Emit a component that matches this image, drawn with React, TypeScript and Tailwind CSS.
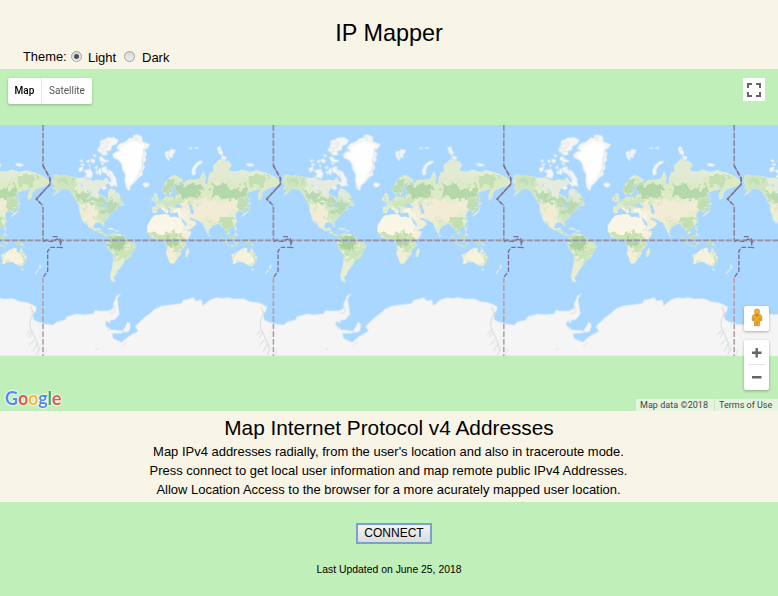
import React from "react";

const TILE = 691.2;
const COPIES = [-1, 0, 1, 2, 3];

const ANTARCTICA =
  "M0 596 L40 600 L50 591 L75 585 L80 575 L110 567 L130 569 L160 567 L165 556 L180 558 L205 558 L220 550 L220 535 L228 520 L228 514 L242 506 L231 521 L235 545 L238 568 L225 583 L200 588 L195 600 L215 615 L250 618 L246 624 L216 625 L219 640 L245 652 L265 635 L295 618 L285 605 L310 580 L330 565 L345 552 L365 543 L390 540 L425 535 L430 525 L444 523 L460 517 L468 528 L485 525 L488 543 L510 525 L530 518 L550 520 L562 517 L580 522 L610 521 L630 530 L655 533 L680 545 L678 558 L670 567 L672 585 L685 591 L703 596 V693 H0Z";

function Land() {
  return (
    <>
      <g transform="translate(-9 0)">
        <path d="M36 170 L40 160 L40 152 L50 148 L60 153 L75 152 L90 154 L118 160 L130 158 L146 164 L160 168 L175 164 L190 168 L198 157 L208 172 L194 182 L180 190 L172 205 L186 214 L196 218 L199 230 L206 216 L204 200 L212 190 L225 196 L230 205 L236 204 L243 222 L250 238 L236 243 L227 247 L234 252 L222 256 L215 263 L207 272 L201 282 L190 290 L192 306 L184 294 L173 291 L164 294 L160 305 L165 313 L178 308 L182 318 L190 325 L203 331 L200 334 L180 323 L160 315 L148 308 L138 292 L130 282 L136 298 L126 284 L122 268 L118 258 L117 240 L110 228 L100 212 L92 198 L80 192 L65 190 L55 202 L38 212 L50 197 L38 190 L46 182Z" />
        <path d="M203 341 L212 328 L225 324 L245 330 L258 342 L268 350 L284 356 L287 366 L276 380 L272 395 L256 405 L248 418 L240 428 L232 438 L227 449 L220 458 L226 472 L214 468 L211 450 L217 430 L220 408 L222 390 L208 375 L200 360Z" />
        <path d="M203 310 L216 309 L225 315 L212 314Z M226 316 L237 317 L230 321Z M242 240 L252 238 L248 244Z" />
      </g>
      <g transform="translate(321 0)">
        <path d="M8 262 L8 245 L22 245 L18 236 L30 230 L45 218 L48 211 L53 217 L68 216 L78 212 L86 200 L78 196 L74 190 L82 178 L76 174 L66 188 L68 200 L60 211 L53 204 L44 208 L36 197 L42 180 L55 161 L72 150 L80 153 L98 164 L95 174 L84 170 L90 180 L105 173 L112 165 L130 165 L150 162 L160 140 L167 156 L163 174 L173 180 L176 158 L181 143 L192 140 L190 122 L210 103 L225 107 L235 109 L245 120 L235 136 L250 140 L265 139 L275 134 L300 141 L320 136 L350 145 L376 157 L393 172 L378 182 L360 188 L350 192 L338 202 L335 218 L326 225 L325 208 L335 190 L310 197 L292 202 L286 220 L296 235 L290 250 L276 262 L272 256 L262 258 L256 270 L260 289 L250 304 L235 312 L240 326 L232 330 L226 315 L216 306 L205 295 L190 301 L178 312 L174 329 L164 308 L158 294 L140 285 L119 276 L119 284 L136 290 L139 297 L125 309 L108 318 L98 301 L88 282 L84 262 L60 264 L61 252 L48 240 L56 258 L50 266 L40 255 L28 247 L22 255 L18 264Z" />
        <path d="M-8 302 L2 285 L12 272 L40 268 L55 269 L60 277 L75 275 L90 281 L96 297 L106 317 L124 320 L119 334 L104 350 L109 360 L99 370 L93 377 L92 388 L80 403 L72 415 L60 415 L55 400 L48 385 L52 370 L48 357 L43 347 L18 341 L4 338 L-8 320Z" />
        <path d="M114 369 L118 378 L112 395 L107 396 L107 382Z" />
        <path d="M245 390 L262 382 L272 374 L285 369 L293 372 L290 382 L300 383 L304 367 L311 382 L321 396 L317 412 L307 424 L294 421 L280 411 L265 411 L249 417 L249 404Z M304 431 L312 432 L308 438Z" />
        <path d="M361 419 L365 425 L360 432 L357 429Z M357 433 L351 444 L346 447 L350 438Z" />
        <path d="M12 207 L20 204 L25 222 L26 229 L13 232 L17 220Z M6 216 L13 215 L10 228 L5 228Z" />
        <path d="M297 230 L304 236 L296 240Z M299 244 L297 258 L284 270 L274 275 L282 265 L292 259Z M295 204 L299 211 L297 227 L293 217Z" />
        <path d="M254 299 L260 307 L258 319 L253 310Z M255 321 L264 332 L257 333Z M260 285 L262 292 L259 292Z M214 333 L232 356 L226 358 L212 337Z M238 336 L253 330 L252 350 L241 349Z M257 342 L266 343 L258 355 L265 356 L257 359Z M232 359 L256 363 L254 366 L234 362Z M284 346 L306 353 L313 363 L302 357 L292 359Z M177 328 L181 333 L178 337Z" />
      </g>
    </>
  );
}

function Ice() {
  return (
    <>
      <g transform="translate(-9 0)">
        <path d="M218 88 L227 80 L240 78 L229 69 L240 55 L252 52 L262 46 L266 40 L280 39 L280 31 L292 29 L306 35 L307 50 L330 58 L322 70 L312 75 L320 86 L315 98 L319 105 L310 113 L314 128 L306 140 L309 149 L296 157 L284 172 L272 182 L268 197 L259 190 L254 165 L256 150 L246 130 L245 118 L235 105 L220 98Z" />
        <path d="M308 177 L313 173 L325 174 L328 181 L319 187 L312 184Z" />
        <path d="M171 74 L180 62 L181 48 L194 43 L203 38 L221 37 L235 46 L228 58 L216 61 L212 76 L199 78 L203 88 L191 91 L180 83Z" />
        <path d="M176 98 L185 94 L193 104 L207 107 L197 112 L183 109Z M115 130 L129 125 L127 137 L118 141Z M130 137 L151 132 L158 146 L154 160 L134 156 L141 146Z M139 108 L151 104 L144 114Z M155 101 L165 105 L163 114 L152 111Z M158 88 L170 91 L164 97Z M162 127 L173 123 L170 133Z M165 141 L173 138 L174 149Z M185 128 L198 124 L202 134 L216 140 L222 151 L228 160 L229 175 L233 183 L223 182 L213 184 L205 174 L215 169 L210 158 L202 151 L197 144 L187 142Z M182 112 L193 116 L187 121Z M146 119 L153 121 L149 127Z M176 132 L183 131 L183 150 L175 145Z M186 184 L196 183 L200 191 L191 194 L185 190Z M118 106 L128 104 L126 112Z M120 118 L134 116 L130 123Z" />
        <path d={ANTARCTICA} />
        <path d="M262 592 L269 594 L271 606 L266 619 L252 622 L250 614 L257 604Z M202 587 L210 586 L209 595Z" />
      </g>
      <g transform="translate(321 0)">
        <path d="M45 83 L54 77 L58 82 L61 73 L76 75 L72 87 L67 85 L69 98 L59 96 L57 108 L49 99Z M115 70 L125 67 L126 72Z M132 69 L143 66 L144 71Z M201 68 L211 64 L215 75 L219 84 L216 91 L207 85Z M216 93 L229 96 L226 104 L215 102Z M157 107 L157 113 L142 122 L136 135 L136 148 L127 150 L125 136 L134 119 L146 110Z M288 116 L300 115 L313 120 L303 124 L291 122Z" />
      </g>
    </>
  );
}

function WorldMap() {
  return (
    <svg className="block h-[231px] w-full" viewBox="0 0 2334 693" preserveAspectRatio="none">
      <defs>
        <filter id="tint" x="-10%" y="-10%" width="120%" height="120%" colorInterpolationFilters="sRGB">
          <feTurbulence type="fractalNoise" baseFrequency="0.06" numOctaves="3" seed="4" result="n" />
          <feDisplacementMap in="SourceGraphic" in2="n" scale="48" xChannelSelector="R" yChannelSelector="G" />
          <feGaussianBlur stdDeviation="1.8" />
        </filter>
        <clipPath id="landClip">
          <path d="M-30 0H740V500H-30Z" />
        </clipPath>
        <mask id="landMask" maskUnits="userSpaceOnUse" x="-30" y="0" width="770" height="693">
          <g fill="white">
            <Land />
          </g>
        </mask>
        <g id="world">
          <g fill="#e4edd0" stroke="#dcebe4" strokeWidth="1.5" strokeLinejoin="round">
            <Land />
          </g>
          <g mask="url(#landMask)">
            <g filter="url(#tint)" clipPath="url(#landClip)">
              <g transform="translate(-9 0)">
                <path fill="#d0e6c1" d="M32 145H100L115 200L180 220L255 210L252 270L195 310L175 290L120 245L92 205L40 212Z" />
                <path fill="#e6ebe0" d="M105 155L200 150L215 200L180 218L150 208L112 182Z" />
                <path fill="#dfe9d8" d="M203 188L230 192L246 225L215 232Z" />
                <path fill="#b8d9b2" d="M98 190L130 205L165 222L200 232L240 230L235 246L210 262L194 278L185 260L205 245L175 237L140 232L115 222Z" />
                <path fill="#bfe0b5" d="M52 165L82 158L90 174L62 182Z" />
                <path fill="#f2ecd4" d="M117 235L166 235L174 258L168 283L166 307L145 306L126 280Z" />
                <path fill="#dfe8c4" d="M128 240L137 238L141 258L133 264Z" />
                <path fill="#c5dfb0" d="M160 308L204 330L199 340L158 320Z" />
                <path fill="#cce5b8" d="M198 320L292 345L280 395L235 410L210 385Z" />
                <path fill="#abd0a0" d="M205 336L225 338L258 344L253 368L238 376L222 374L208 362Z" />
                <path fill="#eaedd3" d="M203 376L222 385L232 425L222 475H205Z" />
                <path fill="#eeecd3" d="M262 360L276 358L266 380L258 386Z" />
              </g>
              <g transform="translate(321 0)">
                <path fill="#dceac6" d="M0 150H395V230H290L250 215L120 230L0 250Z" />
                <path fill="#e3ead4" d="M185 105L245 105L250 140L300 145L280 165L220 170L180 160Z" />
                <path fill="#b2d6a9" d="M72 178L112 174L155 178L150 214L112 222L80 215Z" />
                <path fill="#b5d8ab" d="M188 175L230 178L240 190L290 190L298 212L250 223L215 222L180 205Z" />
                <path fill="#b9dbb0" d="M30 188L64 156L76 162L62 205L40 210Z" />
                <path fill="#c5dfb5" d="M290 150L350 150L345 178L320 183L298 175Z" />
                <path fill="#cce5bf" d="M20 226L100 222L98 242L58 244L36 248Z" />
                <path fill="#f2ebd5" d="M95 230L150 224L175 222L215 232L265 231L252 258L210 275L200 292L165 300L150 280L100 275Z" />
                <path fill="#ddeac2" d="M112 220L145 220L150 232L118 236Z" />
                <path fill="#f3efdb" d="M60 254L120 254L145 300L105 320L85 282Z" />
                <path fill="#dde8c3" d="M160 282L188 286L200 296L175 300Z" />
                <path fill="#c1dfaf" d="M202 282L230 275L250 276L262 300L245 330L220 314Z" />
                <path fill="#c0deb2" d="M262 225L300 215L298 260L272 254Z" />
                <path fill="#f9f6e7" d="M-20 258H92L112 321L65 325L-20 324Z" />
                <path fill="#f4eeda" d="M98 312L132 315L112 352L95 345Z" />
                <path fill="#cbe2b2" d="M-10 328L55 321L95 327L102 354L96 385L58 375L43 350L4 343Z" />
                <path fill="#b0d4a3" d="M48 340L80 336L82 360L60 367Z" />
                <path fill="#f3efd5" d="M44 376L75 373L80 400L55 420Z" />
                <path fill="#f6f2de" d="M244 378L295 380L309 405L298 419L275 410L244 420Z" />
                <path fill="#c9e1b4" d="M304 365L325 390L322 424L306 427L315 398Z" />
                <path fill="#c1dcad" d="M205 330H315V367H205Z" />
              </g>
            </g>
          </g>
          <g fill="#aad7ff" transform="translate(321 0)">
            <path d="M76 240L84 236L90 240L99 245L95 248L76 247Z M116 240L124 237L127 248L132 259L129 268L121 264L121 254Z M138 238L145 237L144 243Z M90 272L98 282L110 297L108 306L98 292Z" />
          </g>
          <g fill="#aad7ff" transform="translate(-9 0)">
            <path d="M188 233L200 236L205 244L197 242L194 250Z M120 181L130 178L127 185Z M137 197L148 195L143 199Z M160 212L164 222L160 219Z" />
          </g>
          <g fill="#f4f5f4" stroke="#e6efef" strokeWidth="1.5">
            <Ice />
          </g>
          <path
            fill="#fefefe"
            d="M218 84L236 82L229 70L246 60L277 47L294 56L305 60L297 95L291 132L275 160L258 183L251 168L249 142L239 115L222 98Z"
          />
          <g fill="none" stroke="#d4dadb" strokeWidth="2.2" opacity=".8">
            <path d="M165 74L178 54L188 59M171 72L191 66L198 50M185 48L195 55M165 84L185 78M187 128L194 140L205 160M271 34L284 39M274 44L284 45M300 70L304 92L297 101L300 124L289 145" />
            <path d="M372 90L379 84L376 100M534 72L527 78" />
          </g>
          <g fill="none" stroke="#d8d9d9" strokeWidth="3">
            <path d="M655 545L661 565L653 585L651 602L658 622L649 637M661 568L666 563M652 616L642 630M658 619L672 650L678 669L690 684M665 646L649 660M673 656L661 679M681 668L672 690M690 684L707 678" />
            <path d="M187 589L190 604L199 617M216 542L215 562L199 566M251 650L237 667M156 675L166 669M6 690L10 672" opacity=".65" />
          </g>
        </g>
        <g id="grid" fill="none" strokeWidth="5">
          <path stroke="#a8b4c8" strokeOpacity=".45" d="M0 0V122L21 160V178L-20 222L0 242V346M0 346H692" />
          <path stroke="#8c8ea6" strokeDasharray="17 6" d="M0 0V122L21 160V178L-20 222L0 242V346" />
          <path stroke="#9690a4" strokeDasharray="17 6" d="M0 346H692" />
          <path stroke="#7b6f90" strokeWidth="4" strokeDasharray="14 5" d="M0 122L21 160V178L-20 222L-7 236M0 350L10 345L15 349H30L42 342L51 347L54 367H23L14 378V438L0 458" />
          <path stroke="#7b6f90" strokeWidth="3.5" d="M29 335H44M50 340L56 354M52 368H60" />
          <path stroke="#b5a3a7" strokeDasharray="17 6" d="M0 458V693" />
        </g>
      </defs>
      <path fill="#aad7ff" d="M0 0H2334V693H0Z" />
      {COPIES.map((n) => (
        <use key={n} href="#world" x={129 + n * TILE} />
      ))}
      {COPIES.map((n) => (
        <use key={n} href="#grid" x={129 + n * TILE} />
      ))}
    </svg>
  );
}

function Radio({ checked = false }: { checked?: boolean }) {
  return (
    <span className="mb-[2px] flex size-[11px] items-center justify-center rounded-full border border-[#a3a3a3] bg-gradient-to-b from-[#d8d8d8] to-[#eeeeee]">
      {checked && <span className="size-[5px] rounded-full bg-[#505050]" />}
    </span>
  );
}

function Pegman() {
  return (
    <svg width="12" height="19" viewBox="0 0 13 20">
      <path fill="#efad24" stroke="#bd7e26" strokeWidth=".7" d="M3.5 6.5h6l2 1.7.3 5-1.5.5-.8-3-.5 8.3H7L6.5 14 6 19H3.8L3.5 10.7l-.9 3-1.4-.5.4-5z" />
      <circle cx="6.5" cy="3.6" r="2.8" fill="#f4b62e" stroke="#bd7e26" strokeWidth=".7" />
      <path fill="#cf8122" d="M4 7h5L6.5 9.5z" />
    </svg>
  );
}

export default function App() {
  return (
    <div className="flex h-[596px] w-[778px] flex-col overflow-hidden bg-[#c1efb9] font-['Liberation_Sans',Arial,sans-serif] text-black">
      <header className="h-[69px] bg-[#f8f4e6] pt-[18px]">
        <h1 className="text-center text-[23.4px] leading-[30px]">IP Mapper</h1>
        <div className="flex h-[18px] items-center pl-[23px] text-[13px] leading-[18px]">
          <span className="w-[48px] text-[12.9px]">Theme:</span>
          <Radio checked />
          <span className="ml-[6px] w-[36px] pt-px">Light</span>
          <Radio />
          <span className="ml-[7px] pt-px">Dark</span>
        </div>
      </header>

      <main className="relative h-[342px] pt-[56px] font-[Roboto,sans-serif]">
        <WorldMap />
        <div className="absolute left-[8px] top-[9px] flex h-[26px] rounded-[2px] bg-white text-[10px] leading-[26px] shadow-[0_1px_3px_rgba(0,0,0,0.25)]">
          <span className="w-[34px] border-r border-[#e8e8e8] text-center font-medium">Map</span>
          <span className="w-[50px] text-center text-[#565656]">Satellite</span>
        </div>
        <div className="absolute left-[743px] top-[9px] flex h-[23px] w-[22px] items-center justify-center bg-white">
          <svg width="14" height="14" viewBox="0 0 14 14" fill="none" stroke="#666" strokeWidth="2">
            <path d="M1 5V1h4M9 1h4v4M13 9v4H9M5 13H1V9" />
          </svg>
        </div>
        <div className="absolute left-[744px] top-[237px] flex h-[25px] w-[25px] items-center justify-center rounded-[2px] bg-white pb-[3px] shadow-[0_1px_3px_rgba(0,0,0,0.3)]">
          <Pegman />
        </div>
        <div className="absolute left-[744px] top-[271px] flex h-[50px] w-[25px] flex-col items-center rounded-[2px] bg-white shadow-[0_1px_3px_rgba(0,0,0,0.3)]">
          <svg width="25" height="50" viewBox="0 0 25 50" fill="none" stroke="#666" strokeWidth="2.4">
            <path d="M8 12.8h9.5M12.7 8v9.4M8 37.3h9.5" />
            <path stroke="#e4e4e4" strokeWidth="1" d="M4 24.5h17" />
          </svg>
        </div>
        <div className="absolute left-[5px] top-[318px] flex font-['Lato',sans-serif] text-[18px] font-bold leading-[22px] tracking-[-0.2px] [text-shadow:0_0_2px_#fff,0_0_2px_#fff,0_0_2px_#fff]">
          <span className="text-[#568bed]">G</span>
          <span className="text-[#df5849]">o</span>
          <span className="text-[#efbb3c]">o</span>
          <span className="text-[#568bed]">g</span>
          <span className="text-[#3fa65c]">l</span>
          <span className="text-[#df5849]">e</span>
        </div>
        <div className="absolute bottom-0 right-0 flex h-[12px] w-[142px] bg-[#e5f4df] text-[9px] leading-[12px] text-[#444]">
          <span className="w-[79px] whitespace-nowrap border-r border-[#c9e5c3] pl-[4px] tracking-[0.05px]">Map data ©2018</span>
          <span className="whitespace-nowrap pl-[4px]">Terms of Use</span>
        </div>
      </main>

      <section className="h-[91px] bg-[#f8f4e6] pt-[3px] text-center">
        <h2 className="text-[20.8px] leading-[28px]">Map Internet Protocol v4 Addresses</h2>
        <div className="text-[12.98px] leading-[19px]">
          <p className="pr-px">Map IPv4 addresses radially, from the user's location and also in traceroute mode.</p>
          <p className="pr-px">Press connect to get local user information and map remote public IPv4 Addresses.</p>
          <p className="pr-px">Allow Location Access to the browser for a more acurately mapped user location.</p>
        </div>
      </section>

      <footer className="flex h-[94px] flex-col items-center pt-[21px]">
        <button className="ml-[10px] h-[21px] w-[76px] border-2 border-[#7b9fce] bg-gradient-to-b from-[#f3f3f3] to-[#dcdcdc] text-[12px] leading-[17px]">
          CONNECT
        </button>
        <p className="mt-[19px] text-[10.4px] leading-[14px]">Last Updated on June 25, 2018</p>
      </footer>
    </div>
  );
}
